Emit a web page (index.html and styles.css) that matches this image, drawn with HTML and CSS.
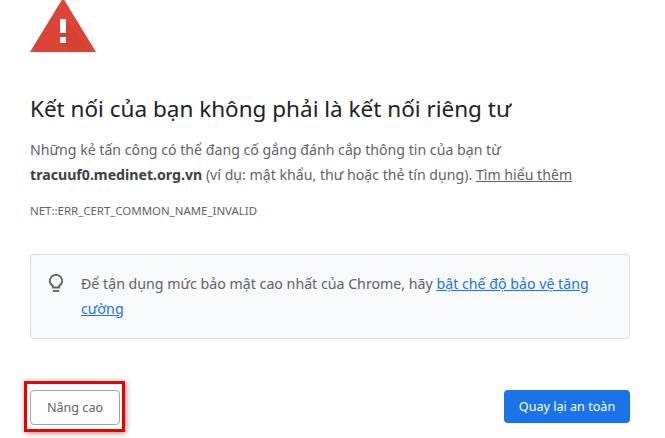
FILE: index.html
```html
<!DOCTYPE html>
<html lang="vi">
<head>
    <meta charset="UTF-8">
    <title>Lỗi bảo mật</title>
    <link rel="stylesheet" href="styles.css">
</head>
<body>
    <div class="container">
        <svg class="warn-icon" width="66" height="52" viewBox="0 0 66 52">
            <polygon points="33,-2 66,52 0,52" fill="#db4437"/>
            <polygon points="36,19 60,52 44,52 30,43 30,19" fill="#c53929" opacity="0.25"/>
            <rect x="30" y="19" width="6" height="14" fill="#fff"/>
            <rect x="30" y="37" width="6" height="6" fill="#fff"/>
        </svg>
        <h1>Kết nối của bạn không phải là kết nối riêng tư</h1>
        <p class="desc">Những kẻ tấn công có thể đang cố gắng đánh cắp thông tin của bạn từ <b>tracuuf0.medinet.org.vn</b> (ví dụ: mật khẩu, thư hoặc thẻ tín dụng). <a class="learn" href="#">Tìm hiểu thêm</a></p>
        <div class="code">NET::ERR_CERT_COMMON_NAME_INVALID</div>
        <div class="tip">
            <svg class="bulb" width="18" height="20" viewBox="0 0 18 20" fill="none" stroke="#5f6368" stroke-width="1.8">
                <path d="M6 13.5 V12 C3.8 10.8 2.8 9 2.8 7 A6.2 6.2 0 0 1 15.2 7 C15.2 9 14.2 10.8 12 12 V13.5 Z"/>
                <path d="M5.8 17 H12.2"/>
            </svg>
            <p>Để tận dụng mức bảo mật cao nhất của Chrome, hãy <a href="#">bật chế độ bảo vệ tăng cường</a></p>
        </div>
        <div class="button-container">
            <div class="marked">
                <button type="button" class="adv-button">Nâng cao</button>
            </div>
            <button type="button" class="back-button">Quay lại an toàn</button>
        </div>
    </div>
</body>
</html>
```

FILE: styles.css
```css
html, body {
    height: 100%;
}
body {
    margin: 0;
    background-color: #fff;
    color: #5f6368;
    font-family: 'Noto Sans', sans-serif;
    overflow: hidden;
}
.container {
    width: 600px;
    margin-left: 30px;
}
.warn-icon {
    display: block;
    overflow: hidden;
}
h1 {
    margin: 39px 0 0;
    color: #202124;
    font-size: 22.5px;
    font-weight: 400;
    line-height: 36px;
}
.desc {
    margin: 10px 0 0;
    font-size: 14.15px;
    line-height: 25px;
}
.desc b {
    color: #3c4043;
}
.learn {
    color: #5f6368;
}
.code {
    margin-top: 16px;
    font-size: 11.45px;
    line-height: 16px;
}
.tip {
    display: flex;
    box-sizing: border-box;
    height: 85px;
    margin-top: 35px;
    padding: 17px 16px;
    background-color: #f8f9fa;
    border: 1px solid #dadce0;
    border-radius: 4px;
}
.bulb {
    flex-shrink: 0;
    margin: 2px 16px 0 0;
}
.tip p {
    margin: 0;
    font-size: 14.2px;
    line-height: 24.5px;
}
.tip a {
    color: #1a73e8;
}
.button-container {
    display: flex;
    justify-content: space-between;
    align-items: flex-start;
    margin-top: 51px;
}
.marked {
    margin: -9px 0 0 -6px;
    padding: 6px 2px 4px 3px;
    border: 3px solid #e00;
    box-shadow: 1px 1px 6px rgba(0, 0, 0, 0.45);
}
button {
    border-radius: 4px;
    font-family: inherit;
    font-size: 12.6px;
}
.adv-button {
    display: block;
    width: 90px;
    height: 35px;
    background-color: #fff;
    color: #5f6368;
    border: 1px solid #a0a4a8;
}
.back-button {
    width: 126px;
    height: 33px;
    background-color: #1a73e8;
    color: #fff;
    border: none;
}
```
